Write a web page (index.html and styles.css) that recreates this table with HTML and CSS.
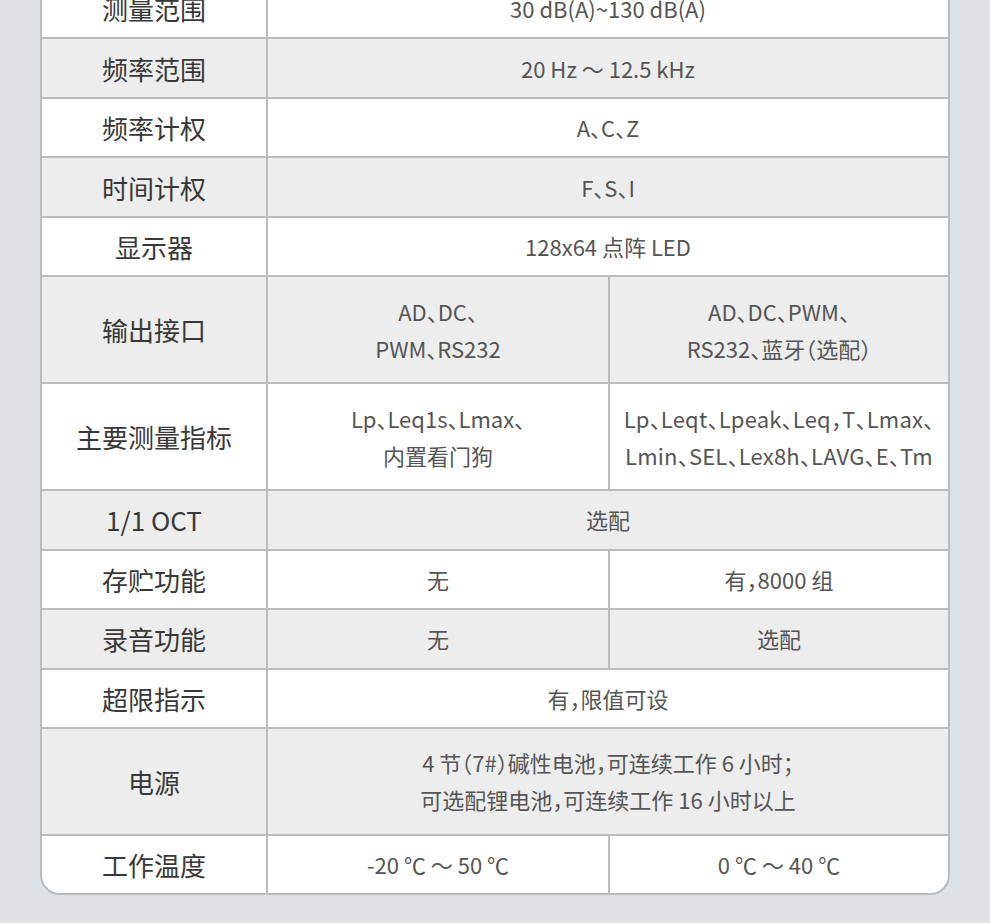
FILE: index.html
```html
<!DOCTYPE html>
<html lang="zh">
<head>
<meta charset="utf-8">
<title>参数表</title>
<link rel="stylesheet" href="styles.css">
</head>
<body>
<div class="page">
  <div class="spec">
    <div class="cell label r">测量范围</div>
    <div class="cell val span2 r">30 dB(A)~130 dB(A)</div>

    <div class="cell label g">频率范围</div>
    <div class="cell val span2 g">20 Hz ～ 12.5 kHz</div>

    <div class="cell label w">频率计权</div>
    <div class="cell val span2 w">A、C、Z</div>

    <div class="cell label g">时间计权</div>
    <div class="cell val span2 g">F、S、I</div>

    <div class="cell label w">显示器</div>
    <div class="cell val span2 w">128x64 点阵 LED</div>

    <div class="cell label g tall">输出接口</div>
    <div class="cell val g tall">AD、DC、<br>PWM、RS232</div>
    <div class="cell val g tall">AD、DC、PWM、<br>RS232、蓝牙（选配）</div>

    <div class="cell label w tall">主要测量指标</div>
    <div class="cell val w tall">Lp、Leq1s、Lmax、<br>内置看门狗</div>
    <div class="cell val w tall wide">Lp、Leqt、Lpeak、Leq，T、Lmax、<br>Lmin、SEL、Lex8h、LAVG、E、Tm</div>

    <div class="cell label g">1/1 OCT</div>
    <div class="cell val span2 g">选配</div>

    <div class="cell label w">存贮功能</div>
    <div class="cell val w">无</div>
    <div class="cell val w">有，8000 组</div>

    <div class="cell label g">录音功能</div>
    <div class="cell val g">无</div>
    <div class="cell val g">选配</div>

    <div class="cell label w">超限指示</div>
    <div class="cell val span2 w">有，限值可设</div>

    <div class="cell label g tall">电源</div>
    <div class="cell val span2 g tall">4 节（7#）碱性电池，可连续工作 6 小时；<br>可选配锂电池，可连续工作 16 小时以上</div>

    <div class="cell label w">工作温度</div>
    <div class="cell val w">-20 ℃ ～ 50 ℃</div>
    <div class="cell val w">0 ℃ ～ 40 ℃</div>
  </div>
</div>
</body>
</html>
```
FILE: styles.css
```css
* { box-sizing: border-box; }
html, body {
  margin: 0;
  padding: 0;
  background: #dce2e5;
  height: 923px;
  overflow: hidden;
}
.page {
  padding: 0 40px 0 40px;
}
.spec {
  margin-top: -22px;
  width: 910px;
  display: grid;
  grid-template-columns: 224px 340px 338px;
  gap: 2px;
  background: #bcbcbc;
  border: 2px solid #bcbcbc;
  border-radius: 0 0 20px 20px;
  overflow: hidden;
  font-family: "Noto Sans CJK SC", "Noto Sans", sans-serif;
}
.cell {
  height: 57.45px;
  display: flex;
  align-items: center;
  justify-content: center;
  text-align: center;
}
.cell.tall { height: 105px; }
.w, .r { background: #ffffff; }
.g { background: #ededed; }
.label {
  font-size: 26px;
  color: #383838;
  font-weight: 400;
}
.val {
  font-size: 22px;
  line-height: 37px;
  color: #555555;
  font-feature-settings: "halt" 1;
}
.span2 { grid-column: span 2; }
.wide { letter-spacing: 0.2px; }
```
